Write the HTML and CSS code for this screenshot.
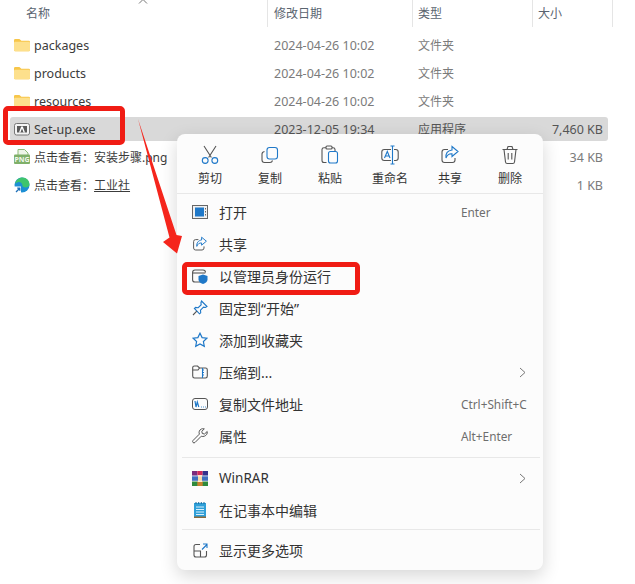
FILE: index.html
```html
<!DOCTYPE html>
<html lang="zh-CN">
<head>
<meta charset="utf-8">
<title>Context menu</title>
<link rel="stylesheet" href="styles.css">
</head>
<body>
<div class="explorer">
  <svg class="sort" width="10" height="6" viewBox="0 0 10 6"><path d="M1 4.500 5 .5l4 4" fill="none" stroke="#777" stroke-width="1"/></svg>
  <div class="head">
    <div class="hc c-name">名称</div>
    <div class="hc c-date">修改日期</div>
    <div class="hc c-type">类型</div>
    <div class="hc c-size">大小</div>
  </div>
  <div class="rows">
    <div class="row">
      <div class="c-name cell"><svg class="fi" width="16" height="16" viewBox="0 0 16 16"><path d="M0 3.200Q0 2 1.200 2h4.200l2 1.800h7.400Q16 3.800 16 5v8q0 1.200-1.200 1.200H1.200Q0 14.200 0 13z" fill="#f7c64a"/><path d="M0 6q0-1.200 1.200-1.200h13.600Q16 4.800 16 6v7q0 1.200-1.200 1.200H1.200Q0 14.200 0 13z" fill="#fde08c"/></svg><span>packages</span></div>
      <div class="c-date cell">2024-04-26 10:02</div><div class="c-type cell">文件夹</div><div class="c-size cell"></div>
    </div>
    <div class="row">
      <div class="c-name cell"><svg class="fi" width="16" height="16" viewBox="0 0 16 16"><path d="M0 3.200Q0 2 1.200 2h4.200l2 1.800h7.400Q16 3.800 16 5v8q0 1.200-1.200 1.200H1.200Q0 14.200 0 13z" fill="#f7c64a"/><path d="M0 6q0-1.200 1.200-1.200h13.600Q16 4.800 16 6v7q0 1.200-1.200 1.200H1.200Q0 14.200 0 13z" fill="#fde08c"/></svg><span>products</span></div>
      <div class="c-date cell">2024-04-26 10:02</div><div class="c-type cell">文件夹</div><div class="c-size cell"></div>
    </div>
    <div class="row">
      <div class="c-name cell"><svg class="fi" width="16" height="16" viewBox="0 0 16 16"><path d="M0 3.200Q0 2 1.200 2h4.200l2 1.800h7.400Q16 3.800 16 5v8q0 1.200-1.200 1.200H1.200Q0 14.200 0 13z" fill="#f7c64a"/><path d="M0 6q0-1.200 1.200-1.200h13.600Q16 4.800 16 6v7q0 1.200-1.200 1.200H1.200Q0 14.200 0 13z" fill="#fde08c"/></svg><span>resources</span></div>
      <div class="c-date cell">2024-04-26 10:02</div><div class="c-type cell">文件夹</div><div class="c-size cell"></div>
    </div>
    <div class="row selected">
      <div class="c-name cell"><svg class="fi" width="16" height="16" viewBox="0 0 16 16"><rect x=".5" y="2.500" width="15" height="11.500" rx="2" fill="#f4f4f4" stroke="#777"/><rect x="3" y="5" width="10" height="6.500" fill="#5a5a5a"/><path d="M5 11.500 7.200 5.500h1.600L11 11.500H9.600L8 7.500l-1.600 4z" fill="#fff"/></svg><span>Set-up.exe</span></div>
      <div class="c-date cell">2023-12-05 19:34</div><div class="c-type cell">应用程序</div><div class="c-size cell">7,460 KB</div>
    </div>
    <div class="row">
      <div class="c-name cell"><svg class="fi" width="16" height="16" viewBox="0 0 16 16"><path d="M4 .5h6.500L14 4v4H4z" fill="#eef5e8" stroke="#8dbb78"/><rect x="0" y="5.500" width="16" height="9.500" rx="1" fill="#7fb069"/><text x="8" y="13" text-anchor="middle" class="png">PNG</text></svg><span class="zh">点击查看：安装步骤.png</span></div>
      <div class="c-date cell"></div><div class="c-type cell"></div><div class="c-size cell">34 KB</div>
    </div>
    <div class="row">
      <div class="c-name cell"><svg class="fi" width="16" height="16" viewBox="0 0 16 16"><circle cx="8" cy="8" r="7.500" fill="#1c8fd4"/><path d="M1 6.500C2.500 2 6 .5 8.500.5c4 0 7 3 7 7 0 2-2 3-4 3-1.500 0-3-.7-3-1.700C8.500 6 6 4.500 4.500 5 3 5.500 1.800 6 1 6.500z" fill="#3ec46d"/><rect x=".5" y="9.500" width="6.500" height="6.500" fill="#fff"/><path d="M2 15 5.500 11.500M3.200 11.200h2.600v2.600" fill="none" stroke="#1d6fb8" stroke-width="1.300"/></svg><span class="zh">点击查看：<span class="ul">工业社</span></span></div>
      <div class="c-date cell"></div><div class="c-type cell"></div><div class="c-size cell">1 KB</div>
    </div>
  </div>
</div>

<div class="menu">
  <div class="toolbar">
    <div class="tool"><svg width="18" height="20" viewBox="0 0 18 20" fill="none" stroke="#555" stroke-width="1.100"><path d="M3 1l7.400 11.500M15 1 7.600 12.500"/><circle cx="4.200" cy="15.500" r="2.900" stroke="#1f78c8"/><circle cx="13.800" cy="15.500" r="2.900" stroke="#1f78c8"/></svg><span>剪切</span></div>
    <div class="tool"><svg width="18" height="20" viewBox="0 0 18 20" fill="none" stroke="#555" stroke-width="1.100"><path d="M3.500 6.500Q1 7 1 9v6q0 2.500 2.500 2.500h5.500q2 0 2.500-2"/><rect x="6" y="2.500" width="10.500" height="11.500" rx="2.500" stroke="#1f78c8"/></svg><span>复制</span></div>
    <div class="tool"><svg width="18" height="20" viewBox="0 0 18 20" fill="none" stroke="#555" stroke-width="1.100"><path d="M5.500 17.500H3Q1 17.500 1 15.500v-11Q1 2.800 3 2.800h2M11 2.800h1q2 0 2 1.700V6"/><rect x="5" y="1" width="6" height="3" rx="1"/><rect x="7.500" y="6.500" width="9" height="11.500" rx="2" stroke="#1f78c8"/></svg><span>粘贴</span></div>
    <div class="tool"><svg width="18" height="20" viewBox="0 0 18 20" fill="none" stroke="#555" stroke-width="1.100"><rect x=".8" y="4.500" width="16.400" height="11" rx="2.500"/><path d="M11.500 1v18" stroke="#fcfcfc" stroke-width="3"/><path d="M11.500 1.500v17M9.500 1h4M9.500 19h4" stroke="#1f78c8"/><path d="M3.500 13 6.300 6.500 9 13M4.500 11h3.600" stroke="#1f78c8"/></svg><span>重命名</span></div>
    <div class="tool"><svg width="18" height="20" viewBox="0 0 18 20" fill="none" stroke="#555" stroke-width="1.100"><path d="M7 4.500H3.500Q1 4.500 1 7v8q0 2.500 2.500 2.500h8q2.500 0 2.500-2.500v-2"/><path d="M11 1.500l6 5-6 5V8.700C8 8.500 6 10 5 13c-.5-4.500 2-7.500 6-8z" stroke="#1f78c8"/></svg><span>共享</span></div>
    <div class="tool"><svg width="18" height="20" viewBox="0 0 18 20" fill="none" stroke="#555" stroke-width="1.100"><path d="M1.500 4.500h15M6 4.500 7 1.500h4l1 3M3 4.500 4.500 17q.2 1.500 1.700 1.500h5.600q1.500 0 1.700-1.500L15 4.500M7.200 8v6.500M10.800 8v6.500"/></svg><span>删除</span></div>
  </div>
  <div class="group first">
    <div class="item"><span class="mi"><svg width="16" height="14" viewBox="0 0 16 14"><rect x=".5" y=".5" width="15" height="13" fill="#f1f1f1" stroke="#666"/><rect x="3" y="2.500" width="9" height="9" fill="#1f78c8"/><path d="M13.500 3v1.500M13.500 6v1.500M13.500 9v1.500" stroke="#666"/></svg></span><span class="lb">打开</span><span class="sc">Enter</span></div>
    <div class="item"><span class="mi"><svg width="16" height="16" viewBox="0 0 18 20" fill="none" stroke="#555" stroke-width="1.200"><path d="M7 4.500H3.500Q1 4.500 1 7v8q0 2.500 2.500 2.500h8q2.500 0 2.500-2.500v-2"/><path d="M11 1.500l6 5-6 5V8.700C8 8.500 6 10 5 13c-.5-4.500 2-7.500 6-8z" stroke="#1f78c8"/></svg></span><span class="lb">共享</span></div>
    <div class="item"><span class="mi"><svg width="16" height="16" viewBox="0 0 16 16" fill="none"><path d="M9 14H3Q.6 14 .6 12V4.500Q.6 2 3 2h8q2.500 0 2.500 2.500" stroke="#555" stroke-width="1.100"/><path d="M.8 5h12.500" stroke="#555" stroke-width="1.100"/><path d="M11 6.500l4.500 1.500v3.500c0 2-1.800 3.500-4.500 4.500-2.700-1-4.500-2.500-4.500-4.500V8z" fill="#1f78c8"/></svg></span><span class="lb">以管理员身份运行</span></div>
    <div class="item"><span class="mi"><svg width="16" height="16" viewBox="0 0 16 16" fill="none" stroke="#1f78c8" stroke-width="1.100"><path d="M9.500 1 15 6.500l-1.500 1-2-.3L8.500 10.200l.2 2.600-1.200 1L2.400 8.500l1.200-1.100 2.600.3 3-3-.3-2z"/><path d="M4.800 11.200 1 15" stroke="#555"/></svg></span><span class="lb">固定到“开始”</span></div>
    <div class="item"><span class="mi"><svg width="16" height="16" viewBox="0 0 16 16" fill="none" stroke="#1f78c8" stroke-width="1.200"><path d="M8 1.200l2.100 4.400 4.800.6-3.500 3.300.9 4.800L8 12l-4.300 2.300.9-4.800L1.100 6.200l4.800-.6z"/></svg></span><span class="lb">添加到收藏夹</span></div>
    <div class="item"><span class="mi"><svg width="16" height="16" viewBox="0 0 16 16" fill="none" stroke="#555" stroke-width="1.100"><path d="M2.500 14Q.7 14 .7 12V3.500Q.7 2 2.500 2h3l2 2h6q1.800 0 1.800 1.800V12q0 2-1.800 2z"/><path d="M.7 6H6l1.500-2"/><path d="M10.500 4v10M10.500 6h1.500M10.500 8.500h1.500M10.500 11h1.500" stroke="#1f78c8"/></svg></span><span class="lb">压缩到...</span><svg class="chev" width="7" height="11" viewBox="0 0 7 11"><path d="M1 1l5 4.500L1 10" fill="none" stroke="#777"/></svg></div>
    <div class="item"><span class="mi"><svg width="16" height="12" viewBox="0 0 16 12" fill="none" stroke="#555" stroke-width="1"><rect x=".5" y=".5" width="15" height="11" rx="2.500"/><path d="M3 3l1 6 1.300-5 1.500 5" stroke="#1f78c8" stroke-width="1.200"/><path d="M9 9h.8M11 9h.8M13 9h.8" stroke="#1f78c8"/></svg></span><span class="lb">复制文件地址</span><span class="sc">Ctrl+Shift+C</span></div>
    <div class="item"><span class="mi"><svg width="16" height="16" viewBox="0 0 16 16" fill="none" stroke="#555" stroke-width="1"><path d="M15.200 3.500 12.500 6 10.300 5.500 9.800 3.300 12.300.9c-2-.6-4.300.2-5 2.300-.4 1.100-.3 2 .1 2.900L1 12.500q-.8 1 0 2 1 .9 2 0l6.300-6.300c1 .4 2.100.4 3.100 0 2-.7 3.300-2.800 2.800-4.700z"/></svg></span><span class="lb">属性</span><span class="sc">Alt+Enter</span></div>
  </div>
  <div class="group second">
    <div class="item"><span class="mi"><svg width="16" height="15" viewBox="0 0 16 15"><rect width="5.300" height="15" fill="#7a2b7d"/><rect x="5.300" width="5.400" height="15" fill="#d02a5c"/><rect x="10.700" width="5.300" height="15" fill="#33308c"/><rect y="10" width="16" height="5" fill="#2f8a3c"/><rect x="5.300" y="10" width="5.400" height="5" fill="#c9822e"/><rect y="4.700" width="16" height="5.300" fill="#3f6fc0"/><rect x="6" y="4" width="4" height="7" fill="#f6d9a8"/><rect y="4.600" width="16" height=".7" fill="#fff"/><rect y="9.800" width="16" height=".7" fill="#fff"/></svg></span><span class="lb latin">WinRAR</span><svg class="chev" width="7" height="11" viewBox="0 0 7 11"><path d="M1 1l5 4.500L1 10" fill="none" stroke="#777"/></svg></div>
    <div class="item"><span class="mi"><svg width="12" height="16" viewBox="0 0 12 16"><rect x="0" y="1" width="12" height="15" fill="#2f9fd8"/><rect x="0" y="14.500" width="12" height="1.500" fill="#8a6a3c"/><path d="M2 0v2M4.700 0v2M7.300 0v2M10 0v2" stroke="#176a9e"/><path d="M2 5h8M2 7.500h8M2 10h8M2 12.500h8" stroke="#d9f0fb"/></svg></span><span class="lb">在记事本中编辑</span></div>
  </div>
  <div class="group">
    <div class="item"><span class="mi"><svg width="15" height="15" viewBox="0 0 15 15" fill="none" stroke="#555" stroke-width="1.100"><path d="M7 1.500H3Q1 1.500 1 3.500v8.500q0 2 2 2h8.500q2 0 2-2V8"/><path d="M1 8h6.500v6"/><path d="M9 6.500 14 1.500M10 1h4v4" stroke="#1f78c8"/></svg></span><span class="lb">显示更多选项</span></div>
  </div>
</div>

<div class="mark mark-file"></div>
<div class="mark mark-admin"></div>
<svg class="arrow" width="60" height="150" viewBox="0 0 60 150"><path d="M8 9 46.500 125 52 126 47 143.500 33 132 39.500 127.500z" fill="#f5251c"/></svg>
</body>
</html>
```
FILE: styles.css
```css
html, body {
  margin: 0;
  padding: 0;
  width: 635px;
  height: 584px;
  overflow: hidden;
  background: #fff;
  font-family: "Noto Sans", "Noto Sans CJK SC", sans-serif;
  font-size: 12.5px;
  color: #333;
}
.explorer {
  position: relative;
  height: 584px;
  box-sizing: border-box;
  padding: 0 27px 0 10px;
}
.sort {
  position: absolute;
  left: 138px;
  top: -1px;
}
.head {
  display: flex;
  height: 27px;
  color: #5a6470;
}
.hc {
  box-sizing: border-box;
  line-height: 27px;
  font-size: 12px;
  border-right: 1px solid #e5e5e5;
  padding-left: 5px;
  flex: none;
}
.hc.c-name { padding-left: 16px; }
.hc.c-date { width: 145px; padding-left: 6px; }
.hc.c-type { width: 120px; }
.hc.c-size { width: 80px; }
.c-name { width: 258px; flex: none; }
.c-date { width: 144px; flex: none; }
.c-type { width: 119px; flex: none; font-size: 12px; }
.c-size { width: 77px; flex: none; }
.rows {
  display: flex;
  flex-direction: column;
  gap: 4px;
  padding-top: 6px;
}
.row {
  display: flex;
  height: 24px;
  align-items: center;
  border-radius: 3px;
  color: #7b7b7b;
  width: 598px;
}
.row.selected { background: #d9d9d9; color: #555; }
.cell { box-sizing: border-box; padding-left: 6px; white-space: nowrap; }
.c-name.cell {
  display: flex;
  align-items: center;
  gap: 4px;
  padding-left: 4px;
  color: #3c3c3c;
  font-size: 12.5px;
}
.c-size.cell {
  text-align: right;
  padding: 0 5px 0 0;
}
.zh { font-size: 12px; }
.png {
  font-size: 7px;
  font-weight: 700;
  fill: #f2f8ee;
}
.fi { flex: none; }
.ul { text-decoration: underline; }
.menu {
  position: absolute;
  left: 177px;
  top: 134px;
  width: 366px;
  height: 436px;
  box-sizing: border-box;
  background: #fcfcfc;
  border-radius: 8px;
  box-shadow: 0 6px 18px rgba(0, 0, 0, .16);
  color: #2b2b2b;
}
.toolbar {
  display: flex;
  height: 59px;
  padding-left: 3px;
}
.tool {
  width: 60px;
  display: flex;
  flex-direction: column;
  align-items: center;
  padding-top: 11px;
  gap: 5px;
  box-sizing: border-box;
  font-size: 12px;
  line-height: 17px;
  color: #333;
}
.group {
  border-top: 1px solid #e8e8e8;
  padding: 4px 0;
  margin: 0 3px 0 5px;
}
.group.first {
  margin: 0;
  padding: 2px 3px 5px 5px;
}
.group.second { padding-bottom: 3px; }
.item {
  display: flex;
  align-items: center;
  height: 32px;
  font-size: 14px;
  padding-left: 5px;
  color: #333;
}
.mi {
  width: 26px;
  flex: none;
  display: flex;
  justify-content: center;
  margin-right: 6px;
}
.lb { flex: 1; white-space: nowrap; }
.lb.latin { font-size: 13.5px; }
.sc {
  width: 71px;
  margin-right: 8px;
  color: #6e6e6e;
  font-size: 11.8px;
  flex: none;
  white-space: nowrap;
}
.chev { margin-right: 14px; }
.mark {
  position: absolute;
  box-sizing: border-box;
  border: 5px solid #f01c14;
  border-radius: 5px;
}
.mark-file {
  left: 3px;
  top: 106px;
  width: 122px;
  height: 39px;
}
.mark-admin {
  left: 182px;
  top: 262px;
  width: 178px;
  height: 33px;
}
.arrow {
  position: absolute;
  left: 130px;
  top: 110px;
}
```
